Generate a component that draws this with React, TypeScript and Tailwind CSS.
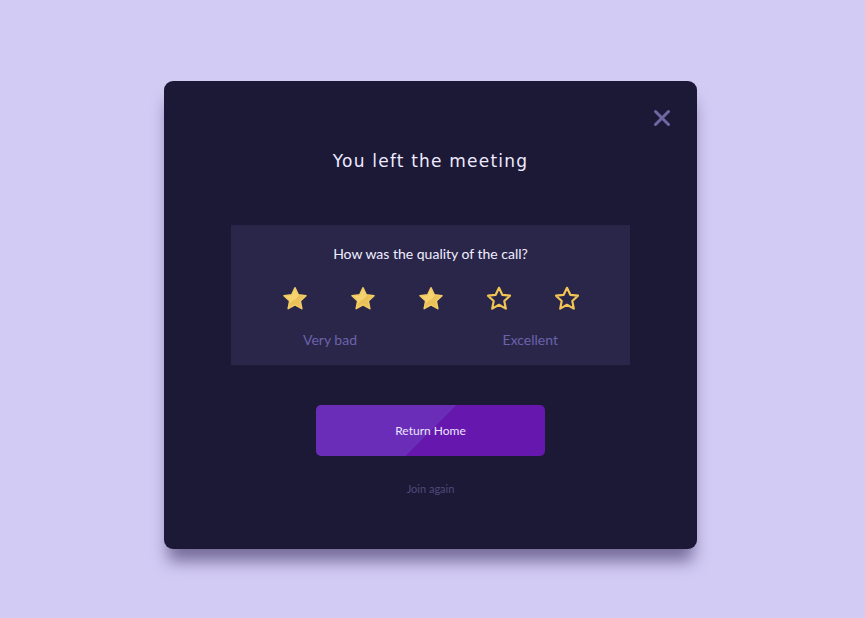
import React from 'react';

const Star = ({ filled }: { filled: boolean }) => {
  const d =
    'M13 1.8l3.3 7 7.7.9-5.7 5.3 1.5 7.6L13 18.8l-6.8 3.8 1.5-7.6L2 9.7l7.7-.9z';
  return (
    <svg width="26" height="26" viewBox="0 0 26 26">
      {filled ? (
        <>
          <defs>
            <linearGradient id="sg" x1="0" y1="0" x2="1" y2="1">
              <stop offset="0.52" stopColor="#f6d36f" />
              <stop offset="0.52" stopColor="#ebc15a" />
            </linearGradient>
          </defs>
          <path d={d} fill="url(#sg)" stroke="#f2cb63" strokeWidth="1.6" strokeLinejoin="round" />
        </>
      ) : (
        <path d={d} fill="none" stroke="#f1c454" strokeWidth="2.2" strokeLinejoin="round" />
      )}
    </svg>
  );
};

const App: React.FC = () => {
  return (
    <div className="min-h-[618px] w-full bg-[#d2cbf4] pt-[81px] pl-[164px]" style={{ fontFamily: 'Lato, "Noto Sans", sans-serif' }}>
      <div className="relative flex h-[468px] w-[533px] flex-col items-center rounded-[9px] bg-[#1b1935] pt-[144px] shadow-[0_16px_16px_-4px_rgba(40,30,80,0.55)]">
        <button className="absolute right-[26px] top-[28px] text-[#6f67a3]">
          <svg width="18" height="18" viewBox="0 0 18 18">
            <path d="M2.5 2.5l13 13M15.5 2.5l-13 13" stroke="currentColor" strokeWidth="3" strokeLinecap="round" />
          </svg>
        </button>
        <h1
          className="absolute top-[68px] text-[17px] tracking-[1.2px] text-[#eeeaff]"
          style={{ fontFamily: '"DejaVu Sans", sans-serif' }}
        >
          You left the meeting
        </h1>
        <div className="flex h-[140px] w-[399px] flex-col items-center bg-[#29264a] pt-[19px]">
          <p className="text-[14px] leading-[20px] text-[#f1eeff]">How was the quality of the call?</p>
          <div className="mt-[22px] flex gap-[42px]">
            <Star filled />
            <Star filled />
            <Star filled />
            <Star filled={false} />
            <Star filled={false} />
          </div>
          <div className="mt-[17px] flex w-full justify-between pl-[72px] pr-[72px] text-[14px] text-[#6b63aa]">
            <span>Very bad</span>
            <span>Excellent</span>
          </div>
        </div>
        <button
          className="mt-[40px] h-[51px] w-[229px] rounded-[5px] text-[12px] text-[#ece4ff]"
          style={{ background: 'linear-gradient(135deg, #6a2db8 50%, #6517ae 50%)' }}
        >
          Return Home
        </button>
        <span className="mt-[25px] text-[11px] text-[#504a7c]">Join again</span>
      </div>
    </div>
  );
};

export default App;
